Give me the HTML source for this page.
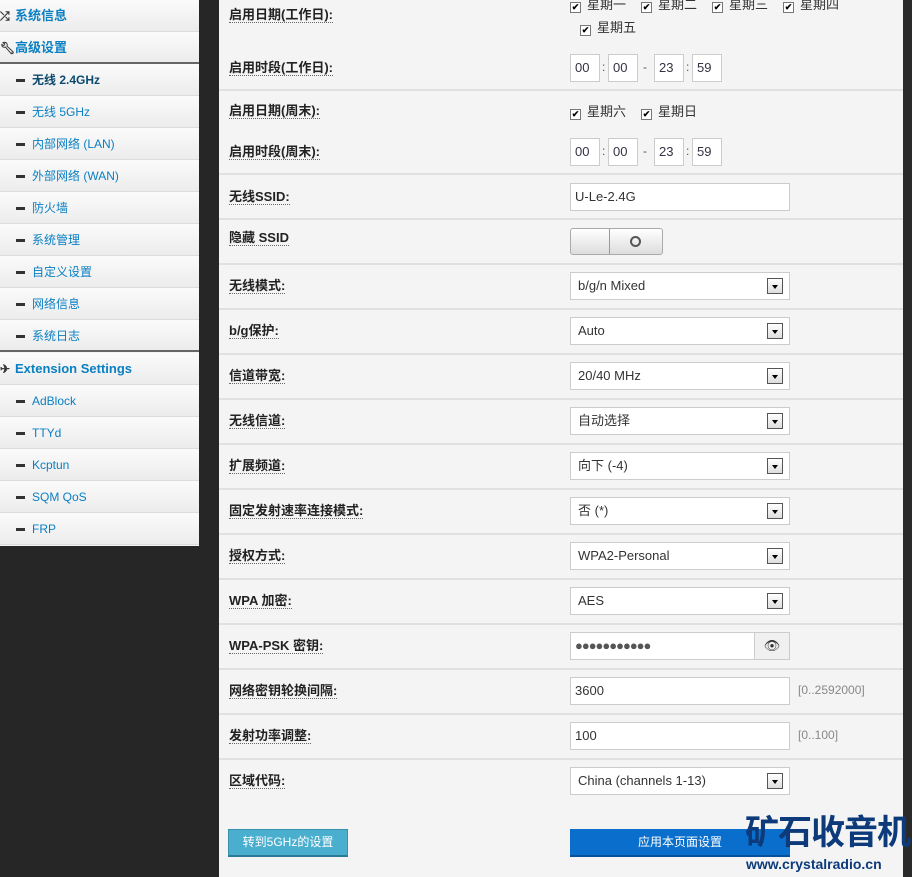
<!DOCTYPE html>
<html><head><meta charset="utf-8"><style>
*{box-sizing:border-box;margin:0;padding:0}
body{width:912px;height:877px;background:#262626;font-family:"Liberation Sans","Noto Sans CJK SC",sans-serif;position:relative;overflow:hidden}
.sb{position:absolute;left:0;top:0;width:199px;height:546px;background:#f4f4f4}
.it{position:absolute;left:0;width:199px;height:32px;border-bottom:1px solid #dcdcdc;background:linear-gradient(#fbfbfb,#ececec);font-size:12px;color:#0a7fc2;line-height:32px}
.it .d{position:absolute;left:16px;top:15px;width:9px;height:3px;background:#333}
.it span{position:absolute;left:32px}
.h{font-weight:bold;font-size:13px}
.h span{left:15px}
.h i{position:absolute;left:0;top:0;font-style:normal;color:#333;font-size:12px}
.main{position:absolute;left:219px;top:0;width:684px;height:877px;background:#f4f4f4}
.rs{position:absolute;right:0;top:0;width:9px;height:877px;background:#2a2a2a}
.ln{position:absolute;left:0;width:684px;height:2px;background:#e0e0e0}
.lb{position:absolute;left:10px;font-size:13px;font-weight:bold;color:#222;border-bottom:1px dotted #666;line-height:15px}
.inp{position:absolute;left:351px;width:220px;height:28px;background:#fff;border:1px solid #ccc;font-size:13px;color:#333;line-height:26px;padding-left:4px}
.sel{padding-left:7px}
.sel b{position:absolute;right:6px;top:5px;width:16px;height:16px;border:1px solid #555;background:linear-gradient(#fff,#ddd)}
.sel b:after{content:"";position:absolute;left:4px;top:6px;border-left:3px solid transparent;border-right:3px solid transparent;border-top:4px solid #000}
.cb{position:absolute;font-size:13px;color:#333;line-height:14px}
.cb i{display:inline-block;width:11px;height:11px;border:1px solid #777;background:#fff;vertical-align:-1px;margin-right:6px;font-style:normal;font-size:9px;line-height:9px;text-align:center;color:#000;font-weight:bold}
.tm{position:absolute;width:30px;height:28px;background:#fff;border:1px solid #ccc;font-size:13px;color:#334;line-height:26px;padding-left:4px}
.sep{position:absolute;font-size:12px;color:#555}
.hint{position:absolute;left:579px;font-size:12px;color:#888}
</style></head><body>
<div class="sb">
<div class="it h" style="top:0"><i>⤮</i><span>系统信息</span></div>
<div class="it h" style="top:32px;border-bottom:2px solid #666"><i>🔧︎</i><span>高级设置</span></div>
<div class="it" style="top:64px;color:#0c4a6e;font-weight:bold"><div class="d"></div><span>无线 2.4GHz</span></div>
<div class="it" style="top:96px"><div class="d"></div><span>无线 5GHz</span></div>
<div class="it" style="top:128px"><div class="d"></div><span>内部网络 (LAN)</span></div>
<div class="it" style="top:160px"><div class="d"></div><span>外部网络 (WAN)</span></div>
<div class="it" style="top:192px"><div class="d"></div><span>防火墙</span></div>
<div class="it" style="top:224px"><div class="d"></div><span>系统管理</span></div>
<div class="it" style="top:256px"><div class="d"></div><span>自定义设置</span></div>
<div class="it" style="top:288px"><div class="d"></div><span>网络信息</span></div>
<div class="it" style="top:320px;border-bottom:2px solid #666"><div class="d"></div><span>系统日志</span></div>
<div class="it h" style="top:353px"><i>✈</i><span>Extension Settings</span></div>
<div class="it" style="top:385px"><div class="d"></div><span>AdBlock</span></div>
<div class="it" style="top:417px"><div class="d"></div><span>TTYd</span></div>
<div class="it" style="top:449px"><div class="d"></div><span>Kcptun</span></div>
<div class="it" style="top:481px"><div class="d"></div><span>SQM QoS</span></div>
<div class="it" style="top:513px"><div class="d"></div><span>FRP</span></div>
</div>
<div class="main">
<div class="lb" style="top:7px">启用日期(工作日):</div>
<div class="cb" style="left:351px;top:-2px"><i>✔</i>星期一</div>
<div class="cb" style="left:422px;top:-2px"><i>✔</i>星期二</div>
<div class="cb" style="left:493px;top:-2px"><i>✔</i>星期三</div>
<div class="cb" style="left:564px;top:-2px"><i>✔</i>星期四</div>
<div class="cb" style="left:361px;top:21px"><i>✔</i>星期五</div>
<div class="lb" style="top:60px">启用时段(工作日):</div>
<div class="tm" style="left:351px;top:54px">00</div><div class="sep" style="left:383px;top:60px">:</div>
<div class="tm" style="left:389px;top:54px">00</div><div class="sep" style="left:424px;top:60px">-</div>
<div class="tm" style="left:435px;top:54px">23</div><div class="sep" style="left:467px;top:60px">:</div>
<div class="tm" style="left:473px;top:54px">59</div>
<div class="ln" style="top:89px"></div>
<div class="lb" style="top:103px">启用日期(周末):</div>
<div class="cb" style="left:351px;top:105px"><i>✔</i>星期六</div>
<div class="cb" style="left:422px;top:105px"><i>✔</i>星期日</div>
<div class="lb" style="top:144px">启用时段(周末):</div>
<div class="tm" style="left:351px;top:138px">00</div><div class="sep" style="left:383px;top:144px">:</div>
<div class="tm" style="left:389px;top:138px">00</div><div class="sep" style="left:424px;top:144px">-</div>
<div class="tm" style="left:435px;top:138px">23</div><div class="sep" style="left:467px;top:144px">:</div>
<div class="tm" style="left:473px;top:138px">59</div>
<div class="ln" style="top:173px"></div>
<div class="lb" style="top:189px">无线SSID:</div>
<div class="inp" style="top:183px">U-Le-2.4G</div>
<div class="ln" style="top:218px"></div>
<div class="lb" style="top:230px">隐藏 SSID</div>
<div style="position:absolute;left:351px;top:228px;width:93px;height:27px;border:1px solid #aaa;border-radius:3px;background:linear-gradient(#fff,#ddd)"><div style="position:absolute;left:38px;top:0;width:1px;height:25px;background:#999"></div><div style="position:absolute;left:59px;top:7px;width:11px;height:11px;border:2px solid #555;border-radius:50%"></div></div>
<div class="ln" style="top:263px"></div>
<div class="lb" style="top:278px">无线模式:</div><div class="inp sel" style="top:272px">b/g/n Mixed<b></b></div>
<div class="ln" style="top:308px"></div>
<div class="lb" style="top:323px">b/g保护:</div><div class="inp sel" style="top:317px">Auto<b></b></div>
<div class="ln" style="top:353px"></div>
<div class="lb" style="top:368px">信道带宽:</div><div class="inp sel" style="top:362px">20/40 MHz<b></b></div>
<div class="ln" style="top:398px"></div>
<div class="lb" style="top:413px">无线信道:</div><div class="inp sel" style="top:407px">自动选择<b></b></div>
<div class="ln" style="top:443px"></div>
<div class="lb" style="top:458px">扩展频道:</div><div class="inp sel" style="top:452px">向下 (-4)<b></b></div>
<div class="ln" style="top:488px"></div>
<div class="lb" style="top:503px">固定发射速率连接模式:</div><div class="inp sel" style="top:497px">否 (*)<b></b></div>
<div class="ln" style="top:533px"></div>
<div class="lb" style="top:548px">授权方式:</div><div class="inp sel" style="top:542px">WPA2-Personal<b></b></div>
<div class="ln" style="top:578px"></div>
<div class="lb" style="top:593px">WPA 加密:</div><div class="inp sel" style="top:587px">AES<b></b></div>
<div class="ln" style="top:623px"></div>
<div class="lb" style="top:638px">WPA-PSK 密钥:</div>
<div class="inp" style="top:632px;width:185px;letter-spacing:-1px;color:#555">●●●●●●●●●●●</div>
<div style="position:absolute;left:535px;top:632px;width:36px;height:28px;border:1px solid #ccc;background:#f0f0f0;text-align:center;line-height:26px;font-size:13px;color:#333">👁︎</div>
<div class="ln" style="top:668px"></div>
<div class="lb" style="top:683px">网络密钥轮换间隔:</div><div class="inp" style="top:677px">3600</div><div class="hint" style="top:683px">[0..2592000]</div>
<div class="ln" style="top:713px"></div>
<div class="lb" style="top:728px">发射功率调整:</div><div class="inp" style="top:722px">100</div><div class="hint" style="top:728px">[0..100]</div>
<div class="ln" style="top:758px"></div>
<div class="lb" style="top:773px">区域代码:</div><div class="inp sel" style="top:767px">China (channels 1-13)<b></b></div>
<div style="position:absolute;left:9px;top:829px;width:120px;height:28px;background:#4aaecf;border:1px solid #3890ad;border-bottom:2px solid #2a7a96;color:#fff;font-size:12px;text-align:center;line-height:25px">转到5GHz的设置</div>
<div style="position:absolute;left:351px;top:829px;width:220px;height:28px;background:#0a6fcc;border-bottom:2px solid #04509a;color:#fff;font-size:12px;text-align:center;line-height:26px">应用本页面设置</div>
</div>
<div class="rs"></div>
<div style="position:absolute;left:745px;top:813px;font-size:34px;font-weight:bold;color:#0d3a7a;letter-spacing:-1px;line-height:40px;white-space:nowrap">矿石收音机</div>
<div style="position:absolute;left:746px;top:856px;font-size:14px;font-weight:bold;color:#0d3a7a;white-space:nowrap">www.crystalradio.cn</div>
</body></html>
